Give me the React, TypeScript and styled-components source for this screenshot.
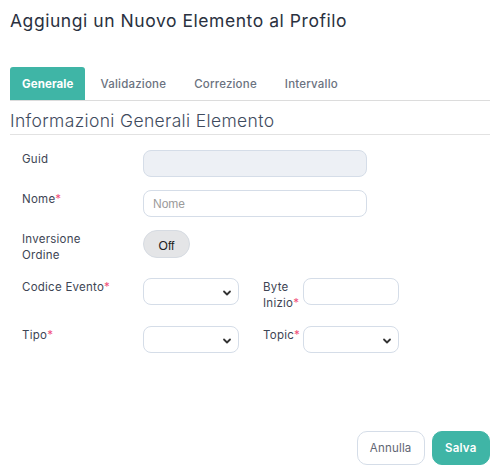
import React from 'react'
import styled, { createGlobalStyle } from 'styled-components'

const GlobalStyle = createGlobalStyle`
  html, body {
    margin: 0;
    padding: 0;
    background: #ffffff;
  }
  body {
    font-family: Inter, 'Noto Sans', sans-serif;
    color: #333c4e;
  }
  * {
    box-sizing: border-box;
  }
`

const Modal = styled.div`
  width: 500px;
  height: 474px;
  display: flex;
  flex-direction: column;
  padding: 0 10px 9px 10px;
`

const Title = styled.h1`
  margin: 9px 0 0 0;
  font-size: 17.5px;
  font-weight: 400;
  line-height: 24px;
  color: #2a3140;
  letter-spacing: 0.55px;
`

const TabBar = styled.div`
  display: flex;
  margin-top: 34px;
  border-bottom: 1px solid #dcdcdc;
  height: 34px;
`

const Tab = styled.div<{ $active?: boolean }>`
  display: flex;
  align-items: center;
  justify-content: center;
  padding: 0 ${(p) => (p.$active ? '12px' : '14px')};
  font-size: 11.5px;
  font-weight: ${(p) => (p.$active ? 700 : 500)};
  letter-spacing: ${(p) => (p.$active ? '0.1px' : '0.2px')};
  color: ${(p) => (p.$active ? '#ffffff' : '#6b7280')};
  background: ${(p) => (p.$active ? '#3fb5a6' : 'transparent')};
  border-radius: 3px 3px 0 0;
  &:nth-child(2) {
    padding-left: 15px;
  }
`

const SectionTitle = styled.h2`
  margin: 8px 0 0 0;
  font-size: 17.5px;
  font-weight: 300;
  line-height: 24px;
  letter-spacing: 0.35px;
  color: #3f4b5e;
  padding-bottom: 1px;
  border-bottom: 1px solid #e2e2e2;
`

const Form = styled.div`
  display: flex;
  flex-direction: column;
  padding: 15px 0 0 12px;
  gap: 13px;
`

const Row = styled.div<{ $tall?: boolean }>`
  display: flex;
  align-items: flex-start;
  min-height: ${(p) => (p.$tall ? '35px' : '0')};
`

const Label = styled.label<{ $width?: number; $offset?: number }>`
  width: ${(p) => p.$width ?? 121}px;
  margin-left: ${(p) => p.$offset ?? 0}px;
  flex-shrink: 0;
  font-size: 11.5px;
  letter-spacing: 0.25px;
  line-height: 16px;
  color: #3e4554;
  padding-top: 1px;
`

const Req = styled.span`
  color: #f0527a;
`

const TextInput = styled.input<{ $width: number; $disabled?: boolean }>`
  width: ${(p) => p.$width}px;
  height: 27px;
  border: 1px solid #d5dde8;
  border-radius: 8px;
  background: ${(p) => (p.$disabled ? '#edf0f5' : '#ffffff')};
  padding: 0 9px;
  font-family: 'Liberation Sans', Arial, sans-serif;
  font-size: 12px;
  color: #333;
  outline: none;
  &::placeholder {
    color: #9a9a9a;
  }
`

const SelectBox = styled.div`
  width: 96px;
  height: 27px;
  border: 1px solid #d5dde8;
  border-radius: 8px;
  background: #fff;
  display: flex;
  align-items: center;
  justify-content: flex-end;
  padding-right: 6px;
  padding-top: 2px;
`

const Toggle = styled.button`
  width: 47px;
  height: 28px;
  border: 1px solid #d6dbe2;
  border-radius: 14px;
  background: #e4e5e7;
  font-family: 'Liberation Sans', Arial, sans-serif;
  font-size: 12px;
  color: #222;
  padding: 3px 0 0 0;
`

const Footer = styled.div`
  margin-top: auto;
  display: flex;
  justify-content: flex-end;
  gap: 7px;
`

const Button = styled.button<{ $primary?: boolean }>`
  height: 34px;
  padding: 0 ${(p) => (p.$primary ? '12.5px' : '12px')};
  border-radius: 10px;
  border: 1px solid ${(p) => (p.$primary ? '#3fb5a6' : '#d5dde8')};
  background: ${(p) => (p.$primary ? '#3fb5a6' : '#ffffff')};
  color: ${(p) => (p.$primary ? '#ffffff' : '#5f6673')};
  font-family: Inter, 'Noto Sans', sans-serif;
  font-size: 11.5px;
  letter-spacing: 0.2px;
  font-weight: ${(p) => (p.$primary ? 600 : 400)};
`

const Chevron = () => (
  <svg width="10" height="10" viewBox="0 0 10 10">
    <path d="M2 3.5 L5 6.5 L8 3.5" fill="none" stroke="#333" strokeWidth="1.8" strokeLinecap="round" strokeLinejoin="round" />
  </svg>
)

const App: React.FC = () => {
  return (
    <>
      <GlobalStyle />
      <Modal>
        <Title>Aggiungi un Nuovo Elemento al Profilo</Title>
        <TabBar>
          <Tab $active>Generale</Tab>
          <Tab>Validazione</Tab>
          <Tab>Correzione</Tab>
          <Tab>Intervallo</Tab>
        </TabBar>
        <SectionTitle>Informazioni Generali Elemento</SectionTitle>
        <Form>
          <Row>
            <Label>Guid</Label>
            <TextInput $width={224} $disabled readOnly />
          </Row>
          <Row>
            <Label>
              Nome<Req>*</Req>
            </Label>
            <TextInput $width={224} placeholder="Nome" />
          </Row>
          <Row $tall>
            <Label>
              Inversione
              <br />
              Ordine
            </Label>
            <Toggle>Off</Toggle>
          </Row>
          <Row $tall>
            <Label>
              Codice Evento<Req>*</Req>
            </Label>
            <SelectBox>
              <Chevron />
            </SelectBox>
            <Label $width={40} $offset={24}>
              Byte
              <br />
              Inizio<Req>*</Req>
            </Label>
            <TextInput $width={96} />
          </Row>
          <Row>
            <Label>
              Tipo<Req>*</Req>
            </Label>
            <SelectBox>
              <Chevron />
            </SelectBox>
            <Label $width={40} $offset={24}>
              Topic<Req>*</Req>
            </Label>
            <SelectBox>
              <Chevron />
            </SelectBox>
          </Row>
        </Form>
        <Footer>
          <Button>Annulla</Button>
          <Button $primary>Salva</Button>
        </Footer>
      </Modal>
    </>
  )
}

export default App
